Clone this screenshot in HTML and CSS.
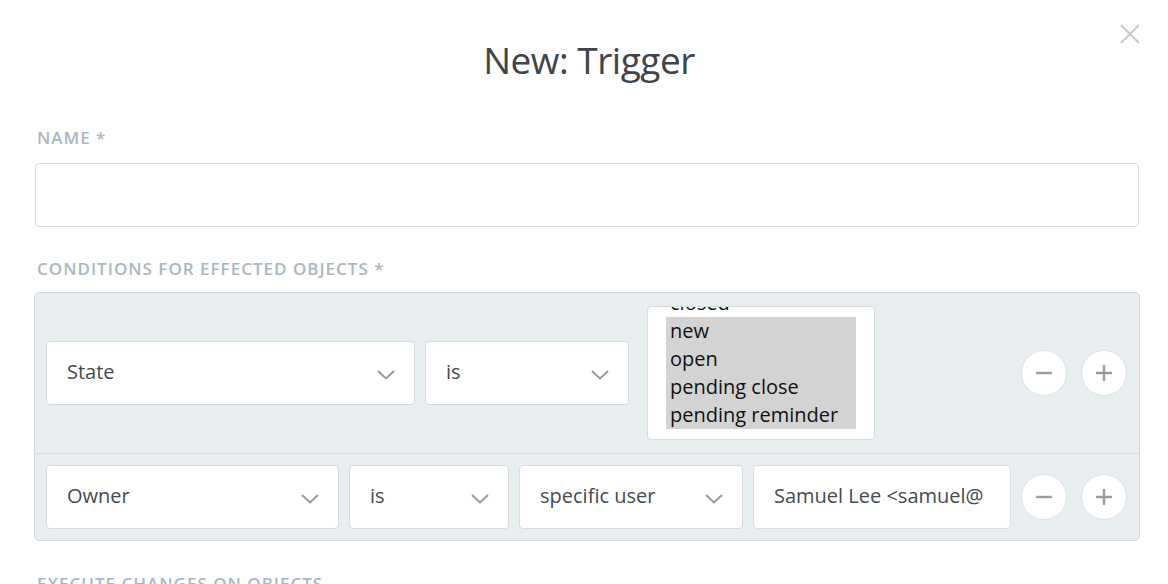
FILE: index.html
```html
<!DOCTYPE html>
<html>
<head>
<meta charset="utf-8">
<link rel="stylesheet" href="styles.css">
</head>
<body>
<div class="modal">
  <header class="header">
    <h1 class="title">New: Trigger</h1>
    <button class="close" aria-label="Close">
      <svg width="20" height="20" viewBox="0 0 20 20"><path d="M1 1L19 19M19 1L1 19" stroke="#c9c9c9" stroke-width="2" fill="none"/></svg>
    </button>
  </header>

  <div class="field">
    <label class="label">Name *</label>
    <div class="input input-name"></div>
  </div>

  <div class="field">
    <label class="label label-tight">Conditions for effected objects *</label>
    <div class="conditions">
      <div class="row row-1">
        <div class="select w-state"><span>State</span><svg class="chev" width="18" height="10" viewBox="0 0 18 10"><path d="M1 1L9 8.5L17 1" stroke="#999" stroke-width="2" fill="none"/></svg></div>
        <div class="select w-is1"><span>is</span><svg class="chev" width="18" height="10" viewBox="0 0 18 10"><path d="M1 1L9 8.5L17 1" stroke="#999" stroke-width="2" fill="none"/></svg></div>
        <div class="multi">
          <div class="multi-list">
            <div class="opt">closed</div>
            <div class="opt sel">new</div>
            <div class="opt sel">open</div>
            <div class="opt sel">pending close</div>
            <div class="opt sel">pending reminder</div>
          </div>
        </div>
        <div class="btns">
          <button class="circle" aria-label="Remove"><svg width="18" height="18" viewBox="0 0 18 18"><path d="M1 9H17" stroke="#9a9a9a" stroke-width="2.4"/></svg></button>
          <button class="circle" aria-label="Add"><svg width="18" height="18" viewBox="0 0 18 18"><path d="M1 9H17M9 1V17" stroke="#9a9a9a" stroke-width="2.4"/></svg></button>
        </div>
      </div>
      <div class="row row-2">
        <div class="select w-owner"><span>Owner</span><svg class="chev" width="18" height="10" viewBox="0 0 18 10"><path d="M1 1L9 8.5L17 1" stroke="#999" stroke-width="2" fill="none"/></svg></div>
        <div class="select w-is2"><span>is</span><svg class="chev" width="18" height="10" viewBox="0 0 18 10"><path d="M1 1L9 8.5L17 1" stroke="#999" stroke-width="2" fill="none"/></svg></div>
        <div class="select w-spec"><span>specific user</span><svg class="chev" width="18" height="10" viewBox="0 0 18 10"><path d="M1 1L9 8.5L17 1" stroke="#999" stroke-width="2" fill="none"/></svg></div>
        <div class="input w-user"><span class="clip">Samuel Lee &lt;samuel@example.com&gt;</span></div>
        <div class="btns">
          <button class="circle" aria-label="Remove"><svg width="18" height="18" viewBox="0 0 18 18"><path d="M1 9H17" stroke="#9a9a9a" stroke-width="2.4"/></svg></button>
          <button class="circle" aria-label="Add"><svg width="18" height="18" viewBox="0 0 18 18"><path d="M1 9H17M9 1V17" stroke="#9a9a9a" stroke-width="2.4"/></svg></button>
        </div>
      </div>
    </div>
  </div>

  <div class="field">
    <label class="label">Execute changes on objects</label>
  </div>
</div>
</body>
</html>
```
FILE: styles.css
```css
* { box-sizing: border-box; }
html, body { margin: 0; padding: 0; background: #fff; }
body {
  font-family: "Open Sans", "Noto Sans", sans-serif;
  color: #444a4f;
  overflow: hidden;
  height: 584px;
}
.modal {
  padding: 0 28px 0 34px;
}
.header {
  position: relative;
  height: 126px;
  padding-top: 34px;
}
.title {
  margin: 0;
  text-align: center;
  font-size: 37px;
  line-height: 52px;
  font-weight: 400;
  color: #3e4449;
  letter-spacing: -0.5px;
  padding-left: 4px;
}
.close {
  position: absolute;
  top: 24px;
  right: 0px;
  width: 20px;
  height: 20px;
  padding: 0;
  border: 0;
  background: none;
}
.close svg { display: block; }
.field { display: flex; flex-direction: column; }
.label {
  display: block;
  font-size: 17px;
  line-height: 24px;
  font-weight: 600;
  text-transform: uppercase;
  letter-spacing: 1px;
  color: #a9b7c0;
  padding-left: 3px;
  margin-bottom: 13px;
}
.label-tight { margin-bottom: 11px; }
.input {
  background: #fff;
  border: 1px solid #d7dee3;
  border-radius: 4px;
  height: 64px;
}
.input-name {
  width: 1104px;
  margin-left: 1px;
  margin-bottom: 30px;
}
.conditions {
  background: #e8edf0;
  border: 1px solid #d3dbe0;
  border-radius: 5px;
  width: 1106px;
  margin-bottom: 31px;
}
.row {
  display: flex;
  align-items: center;
  padding: 0 12px 0 11px;
}
.row-1 {
  height: 161px;
  border-bottom: 1px solid #d3dbe0;
}
.row-2 {
  height: 86px;
}
.select {
  position: relative;
  display: flex;
  align-items: center;
  height: 64px;
  background: #fff;
  border: 1px solid #d3dbe0;
  border-radius: 4px;
  padding-left: 20px;
  padding-bottom: 3px;
  font-size: 20px;
  color: #444a4f;
  flex: none;
}
.chev {
  position: absolute;
  right: 19px;
  top: 28px;
}
.w-state { width: 369px; margin-right: 10px; }
.w-is1 { width: 204px; margin-right: 18px; }
.w-owner { width: 293px; margin-right: 10px; }
.w-is2 { width: 160px; margin-right: 10px; }
.w-spec { width: 224px; margin-right: 10px; }
.w-user {
  width: 258px;
  flex: none;
  display: flex;
  align-items: center;
  padding: 0 27px 3px 20px;
  font-size: 20px;
  color: #444a4f;
  overflow: hidden;
  white-space: nowrap;
}
.clip { overflow: hidden; display: block; width: 100%; }
.multi {
  flex: none;
  width: 228px;
  height: 134px;
  background: #fff;
  border: 1px solid #d3dbe0;
  border-radius: 4px;
  overflow: hidden;
  padding: 0 18px;
}
.multi-list {
  margin-top: -18px;
}
.opt {
  font-size: 20px;
  line-height: 28px;
  height: 28px;
  color: #111;
  padding-left: 4px;
  white-space: nowrap;
}
.opt.sel { background: #d3d3d3; }
.btns {
  margin-left: auto;
  display: flex;
  gap: 14px;
}
.circle {
  width: 46px;
  height: 46px;
  border-radius: 50%;
  background: #fff;
  border: 1px solid #dce2e6;
  padding: 0;
  display: flex;
  align-items: center;
  justify-content: center;
}
.circle svg { display: block; }
```
